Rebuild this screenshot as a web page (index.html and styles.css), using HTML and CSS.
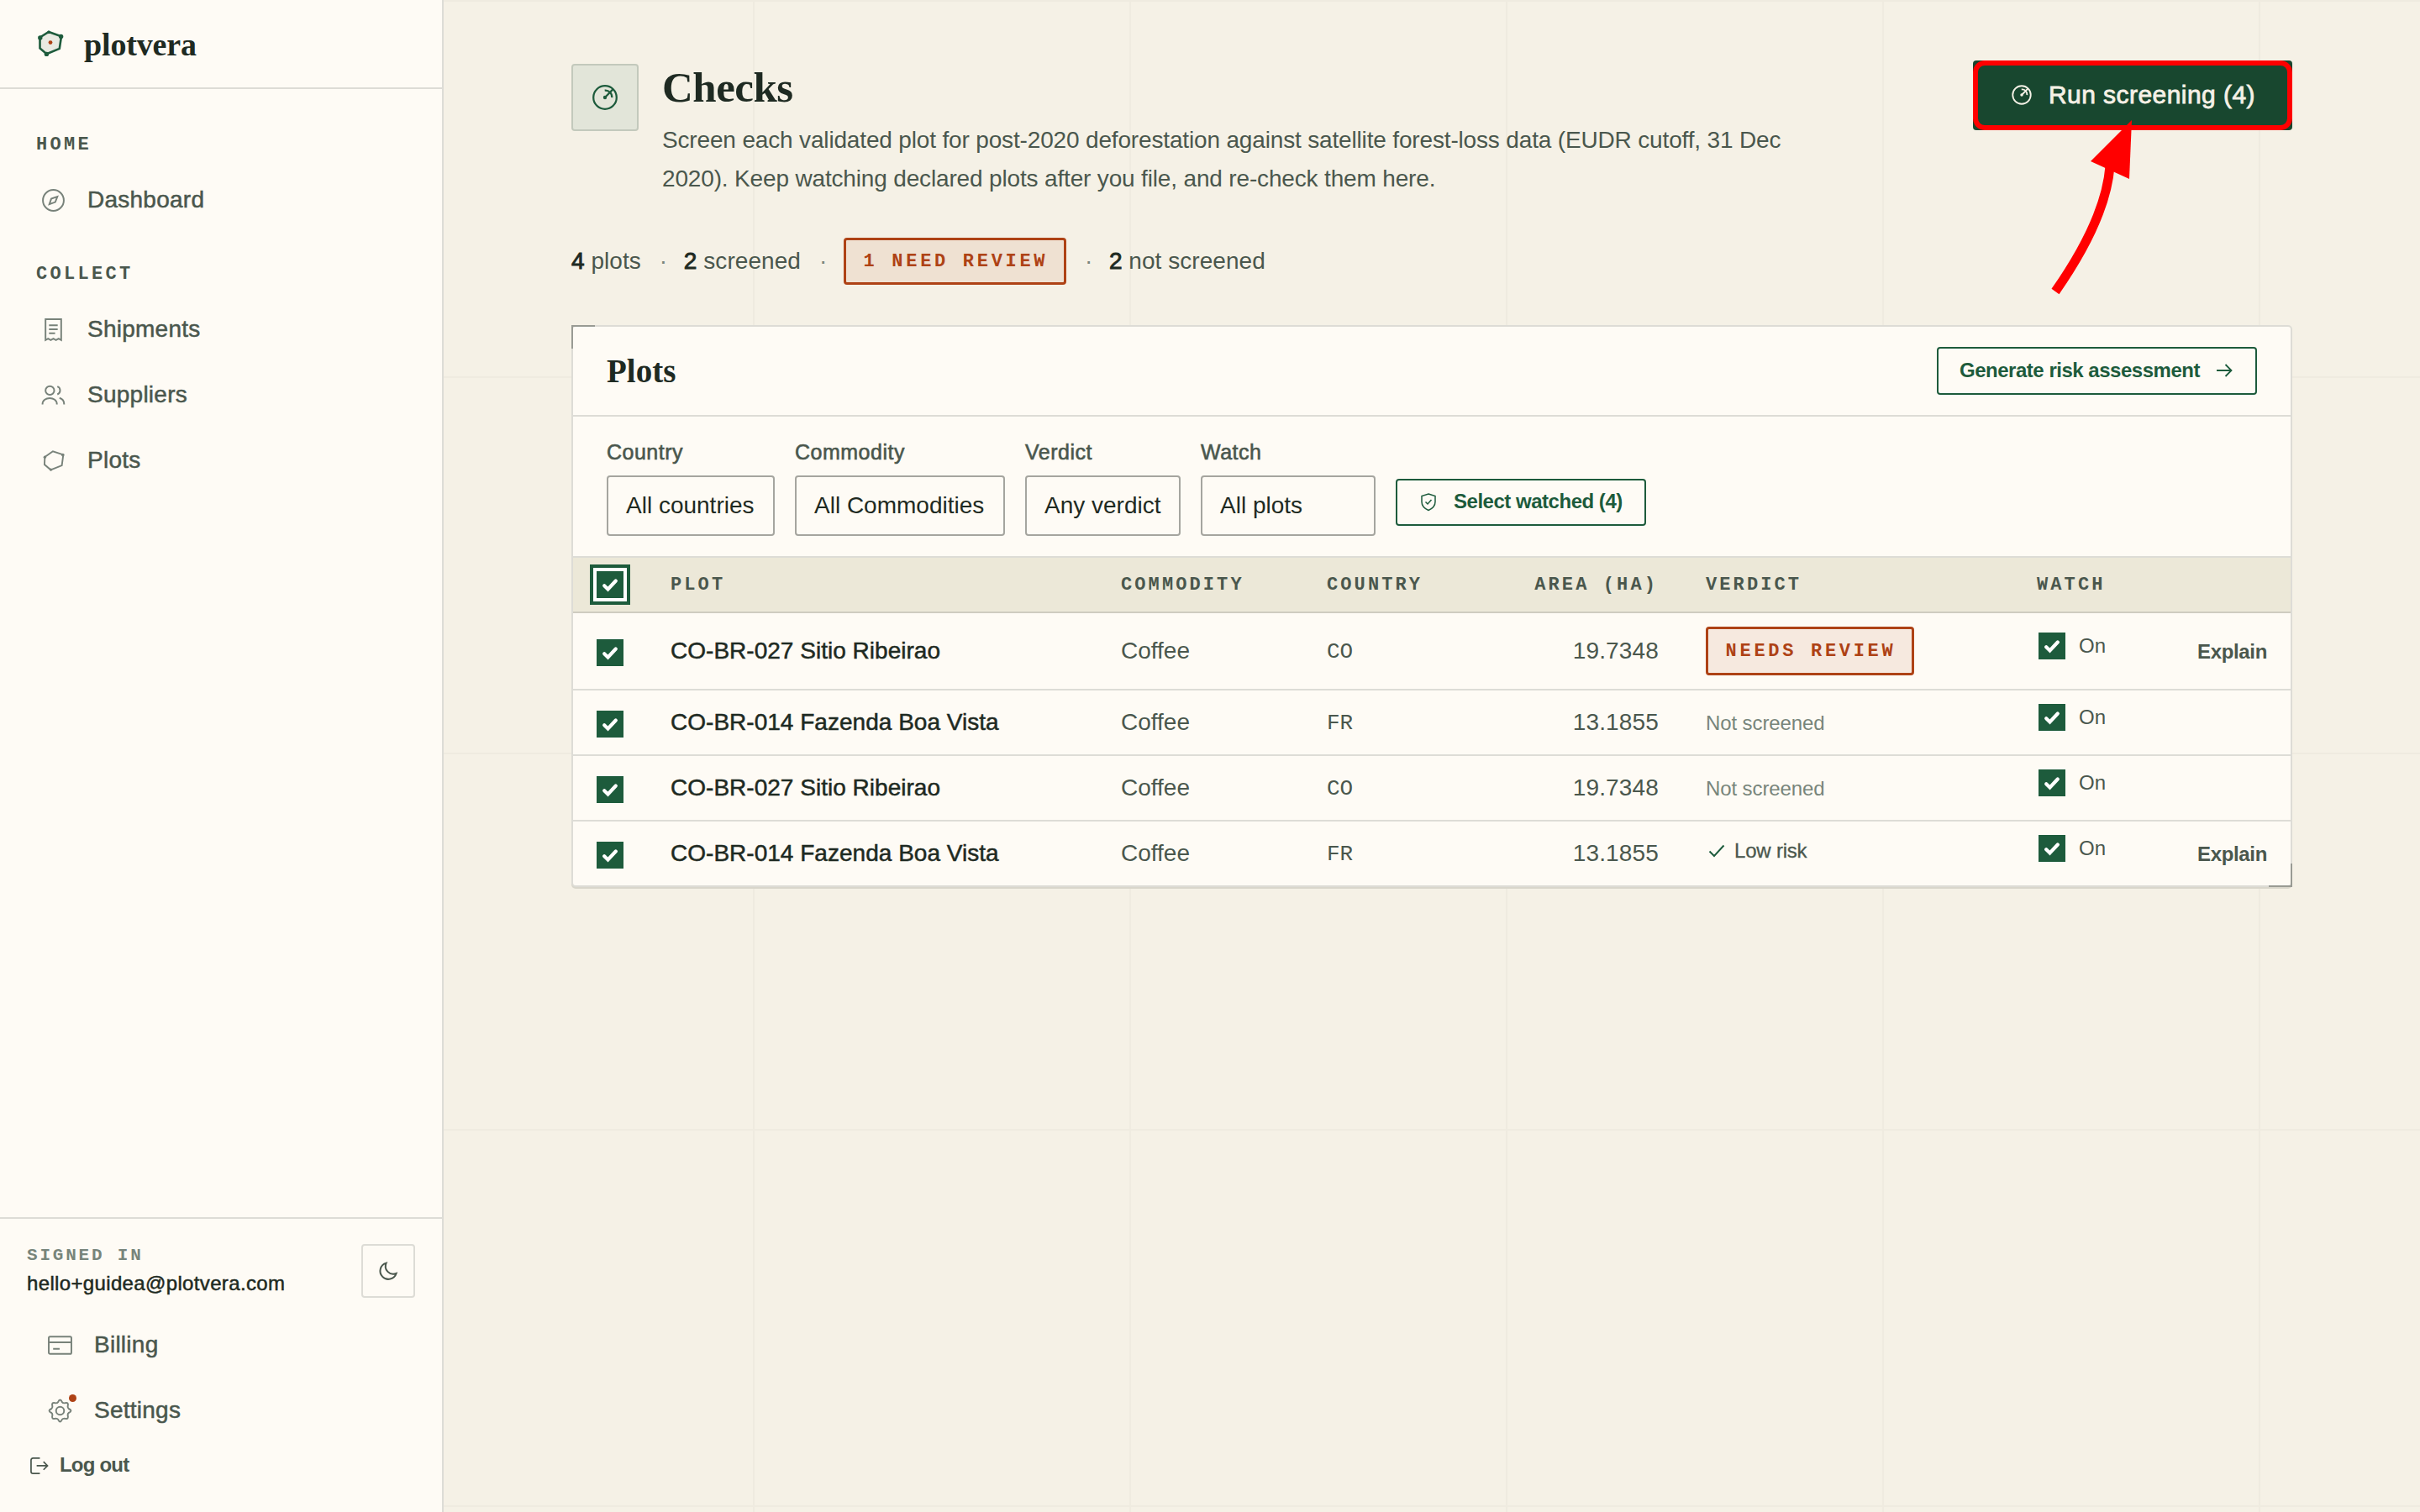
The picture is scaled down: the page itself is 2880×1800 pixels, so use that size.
FILE: index.html
```
<!DOCTYPE html>
<html lang="en">
<head>
    <meta charset="utf-8" />
    <meta name="viewport" content="width=device-width, initial-scale=1.0">
    <title>Checks - plotvera</title>
    <link rel="stylesheet" href="styles.css">
</head>
<body>

    <!-- Shared icons -->
    <svg class="sprite" width="0" height="0">
        <symbol id="i-gauge" viewBox="0 0 24 24">
            <circle cx="12" cy="12" r="9.2"/>
            <path d="M12 12l6.4-6.6M11.8 6.4c3.2-.4 5.900 2.400 5.700 5.700"/>
            <circle cx="12" cy="12" r=".7" fill="currentColor"/>
        </symbol>
        <symbol id="i-tick" viewBox="0 0 32 32">
            <path d="M9.2 17.2l4.3 4.2 9.3-9.900"/>
        </symbol>
        <symbol id="i-plot" viewBox="0 0 24 24">
            <path d="M3 8L11.500 2l11 3.600-1.500 11.400L9.2 21.600 2.600 16z"/>
            <circle class="node" cx="3" cy="8.2" r="1.500"/>
            <circle class="node" cx="22" cy="5.900" r="1.600"/>
            <circle class="node" cx="9.400" cy="21.400" r="1.500"/>
        </symbol>
    </svg>

    <div class="app">
        <aside class="sidebar">
            <div class="brand">
                <svg class="brand-mark" viewBox="0 0 32 34">
                    <path d="M3.5 9.5L14 3l15 5.3-2.2 14.6-15.3 6.3L3.5 22.5z"/>
                    <circle class="node" cx="3.8" cy="10" r="2.7"/>
                    <circle class="node" cx="14" cy="3.4" r="1.8"/>
                    <circle class="node" cx="28.6" cy="8.4" r="2.7"/>
                    <circle class="node" cx="11.4" cy="29.4" r="2.7"/>
                    <circle class="dot" cx="16" cy="15.6" r="2.4"/>
                </svg>
                <span class="brand-name">plotvera</span>
            </div>

            <nav class="nav">
                <div class="nav-group">
                    <h6 class="nav-title">HOME</h6>
                    <a class="nav-item">
                        <svg class="icon" viewBox="0 0 28 28"><circle cx="14" cy="14" r="12"/><path d="M18.6 9.8l-2.4 6.2-6.8 2.4 2.2-6.2z"/></svg>
                        Dashboard
                    </a>
                </div>
                <div class="nav-group">
                    <h6 class="nav-title">COLLECT</h6>
                    <a class="nav-item">
                        <svg class="icon" viewBox="0 0 28 28"><path d="M5 26V2h18v24l-3-1.7-3 1.7-3-1.7-3 1.7-3-1.7zM9 9h10M9 13.5h10M9 18h7"/></svg>
                        Shipments
                    </a>
                    <a class="nav-item">
                        <svg class="icon" viewBox="0 0 28 28"><circle cx="10" cy="8.6" r="5"/><path d="M1.5 24.5c0-9.6 16.6-9.6 16.6 0M18.6 4c4.2 1.4 4.2 7.6 0 9M21 17.2c3.6 1 5.4 3.8 5.4 7.3"/></svg>
                        Suppliers
                    </a>
                    <a class="nav-item">
                        <svg class="icon plot-icon"><use href="#i-plot"/></svg>
                        Plots
                    </a>
                </div>
            </nav>

            <div class="account">
                <div class="account-row">
                    <div>
                        <div class="account-label">SIGNED IN</div>
                        <div class="account-email">hello+guidea@plotvera.com</div>
                    </div>
                    <button class="theme-toggle">
                        <svg viewBox="0 0 24 24"><path d="M9.6 2.6a9.8 9.8 0 1 0 12 12.4A9.3 9.3 0 0 1 9.6 2.6z"/></svg>
                    </button>
                </div>
                <a class="nav-item">
                    <svg class="icon" viewBox="0 0 28 28"><rect x="1" y="4" width="26" height="20" rx="1.5"/><path d="M1 10.6h26M6 18h7.5"/></svg>
                    Billing
                </a>
                <a class="nav-item">
                    <span class="icon-wrap">
                        <!-- eight rounded teeth round the hub -->
                        <svg class="icon" viewBox="0 0 28 28"><circle cx="14" cy="14" r="4.6"/><path d="M11.6 4.200Q14-1.200 16.400 4.200Q17 5.200 19 5.200Q24.400 3.600 22.800 9Q22.800 11 23.800 11.600Q29.200 14 23.800 16.400Q22.800 17 22.800 19Q24.400 24.400 19 22.800Q17 22.800 16.400 23.800Q14 29.200 11.600 23.800Q11 22.800 9 22.800Q3.600 24.400 5.200 19Q5.200 17 4.200 16.400Q-1.200 14 4.200 11.600Q5.200 11 5.200 9Q3.600 3.600 9 5.200Q11 5.200 11.600 4.200z"/></svg>
                        <i class="alert-dot"></i>
                    </span>
                    Settings
                </a>
                <a class="logout">
                    <svg viewBox="0 0 24 22"><path d="M13 2H4.500Q2 2 2 4.500V18.500Q2 21 4.500 21H13M9 11.500H22.500M17.500 6.500l5 5-5 5"/></svg>
                    Log out
                </a>
            </div>
        </aside>

        <main class="main">
            <header class="page-head">
                <div class="page-icon"><svg><use href="#i-gauge"/></svg></div>
                <div class="page-text">
                    <h1>Checks</h1>
                    <p>Screen each validated plot for post-2020 deforestation against satellite forest-loss data (EUDR cutoff, 31 Dec<br>2020). Keep watching declared plots after you file, and re-check them here.</p>
                </div>
                <div class="run">
                    <button class="run-btn"><svg><use href="#i-gauge"/></svg>Run screening (4)</button>
                    <svg class="run-arrow" viewBox="0 0 120 220">
                        <path class="shaft" d="M26 207Q86 121 91 58"/>
                        <path class="tip" d="M117 3L68 52l46 21z"/>
                    </svg>
                </div>
            </header>

            <div class="stats">
                <span><b>4</b> plots</span><i class="sep">·</i>
                <span><b>2</b> screened</span><i class="sep">·</i>
                <span class="badge badge-summary">1 NEED REVIEW</span><i class="sep">·</i>
                <span><b>2</b> not screened</span>
            </div>

            <section class="panel">
                <div class="panel-head">
                    <h2>Plots</h2>
                    <button class="btn btn-risk">Generate risk assessment
                        <svg class="arrow" viewBox="0 0 20 18"><path d="M1 9h17.500M11.500 2l7 7-7 7"/></svg>
                    </button>
                </div>

                <div class="filters">
                    <div class="field"><label>Country</label><div class="select w-country">All countries</div></div>
                    <div class="field"><label>Commodity</label><div class="select w-commodity">All Commodities</div></div>
                    <div class="field"><label>Verdict</label><div class="select w-verdict">Any verdict</div></div>
                    <div class="field"><label>Watch</label><div class="select w-watch">All plots</div></div>
                    <button class="btn btn-watched">
                        <svg class="shield" viewBox="0 0 20 22"><path d="M10 1.500L18 4v7c0 5-3.500 8-8 10-4.500-2-8-5-8-10V4zM6.500 11l2.500 2.500 4.500-5"/></svg>
                        Select watched (4)
                    </button>
                </div>

                <table class="plots">
                    <colgroup>
                        <col class="c-check"><col class="c-plot"><col class="c-commodity"><col class="c-country"><col class="c-area"><col class="c-verdict"><col class="c-watch"><col>
                    </colgroup>
                    <thead>
                        <tr>
                            <th><span class="check focused"><svg><use href="#i-tick"/></svg></span></th>
                            <th>PLOT</th><th>COMMODITY</th><th>COUNTRY</th><th class="num">AREA (HA)</th><th class="verdict">VERDICT</th><th>WATCH</th><th></th>
                        </tr>
                    </thead>
                    <tbody>
                        <tr class="flagged">
                            <td><span class="check"><svg><use href="#i-tick"/></svg></span></td>
                            <td class="name">CO-BR-027 Sitio Ribeirao</td>
                            <td>Coffee</td>
                            <td class="code">CO</td>
                            <td class="num">19.7348</td>
                            <td class="verdict"><span class="badge badge-row">NEEDS REVIEW</span></td>
                            <td><span class="watch"><span class="check"><svg><use href="#i-tick"/></svg></span>On</span></td>
                            <td class="action">Explain</td>
                        </tr>
                        <tr>
                            <td><span class="check"><svg><use href="#i-tick"/></svg></span></td>
                            <td class="name">CO-BR-014 Fazenda Boa Vista</td>
                            <td>Coffee</td>
                            <td class="code">FR</td>
                            <td class="num">13.1855</td>
                            <td class="verdict muted">Not screened</td>
                            <td><span class="watch"><span class="check"><svg><use href="#i-tick"/></svg></span>On</span></td>
                            <td class="action"></td>
                        </tr>
                        <tr>
                            <td><span class="check"><svg><use href="#i-tick"/></svg></span></td>
                            <td class="name">CO-BR-027 Sitio Ribeirao</td>
                            <td>Coffee</td>
                            <td class="code">CO</td>
                            <td class="num">19.7348</td>
                            <td class="verdict muted">Not screened</td>
                            <td><span class="watch"><span class="check"><svg><use href="#i-tick"/></svg></span>On</span></td>
                            <td class="action"></td>
                        </tr>
                        <tr>
                            <td><span class="check"><svg><use href="#i-tick"/></svg></span></td>
                            <td class="name">CO-BR-014 Fazenda Boa Vista</td>
                            <td>Coffee</td>
                            <td class="code">FR</td>
                            <td class="num">13.1855</td>
                            <td class="verdict"><span class="low"><svg viewBox="0 0 20 16"><path d="M1.500 8.500l5.500 5.500L18.500 1.500"/></svg>Low risk</span></td>
                            <td><span class="watch"><span class="check"><svg><use href="#i-tick"/></svg></span>On</span></td>
                            <td class="action">Explain</td>
                        </tr>
                    </tbody>
                </table>
            </section>
        </main>
    </div>

</body>
</html>
```
FILE: styles.css
```
:root {
    --bg:      #f5f1e6;
    --grid:    #efebe0;
    --paper:   #fefbf5;
    --sand:    #ece8d8;
    --line:    #dddcd6;
    --ink:     #1e2a22;
    --body:    #4a574d;
    --muted:   #78857b;
    --green:   #1d5b3c;
    --deep:    #18472f;
    --rust:    #ae4215;
    --sans: "Liberation Sans", Arial, sans-serif;
    --serif: "Liberation Serif", "Times New Roman", serif;
    --mono: "Liberation Mono", "Courier New", monospace;
}

*, *::before, *::after { box-sizing: border-box; }

html, body {
    margin: 0;
    padding: 0;
    height: 100%;
}

body {
    font-family: var(--sans);
    font-size: 28px;
    color: var(--body);
    background-color: var(--bg);
    background-image:
        linear-gradient(var(--grid) 2px, transparent 2px),
        linear-gradient(90deg, var(--grid) 2px, transparent 2px);
    background-size: 448px 448px;
    overflow: hidden;
}

h1, h2, h6, p { margin: 0; }

button {
    font-family: inherit;
    cursor: pointer;
}

svg {
    display: block;
    flex: none;
    fill: none;
    stroke: currentColor;
}

.sprite { position: absolute; }

.app {
    display: flex;
    height: 1800px;
}

/* Sidebar */
.sidebar {
    display: flex;
    flex-direction: column;
    width: 528px;
    flex: none;
    background: var(--paper);
    border-right: 2px solid var(--line);
}

.brand {
    display: flex;
    align-items: center;
    gap: 24px;
    height: 106px;
    padding-left: 44px;
    border-bottom: 2px solid var(--line);
}

.brand-mark {
    width: 32px;
    height: 34px;
    stroke: var(--green);
    stroke-width: 2.6;
}

.brand-mark path { fill: #e9eae2; }
.brand-mark .node { fill: var(--green); stroke: none; }
.brand-mark .dot { fill: var(--rust); stroke: none; }

.brand-name {
    padding-top: 2px;
    font: bold 38px/60px var(--serif);
    letter-spacing: -0.15px;
    color: var(--ink);
}

.nav {
    flex: 1;
    padding: 45px 0 0 43px;
}

.nav-group { margin-bottom: 28px; }

.nav-title {
    height: 48px;
    font: bold 22px/44px var(--mono);
    letter-spacing: 3.3px;
}

.nav-item {
    display: flex;
    align-items: center;
    gap: 26px;
    height: 78px;
    padding-left: 6px;
    letter-spacing: 0.25px;
    -webkit-text-stroke: 0.5px;
}

.icon {
    width: 29px;
    height: 29px;
    color: #78827a;
    stroke-width: 1.9;
}

.plot-icon {
    padding: 1px;
    stroke-width: 1.7;
}

.node { fill: currentColor; stroke: none; }

.account {
    height: 351px;
    padding: 29px 32px 0;
    border-top: 2px solid var(--line);
}

.account-row {
    display: flex;
    align-items: center;
    justify-content: space-between;
    height: 66px;
    margin-bottom: 16px;
}

.account-label {
    font: bold 21px/30px var(--mono);
    letter-spacing: 2.8px;
    color: var(--muted);
}

.account-email {
    font-size: 24px;
    line-height: 36px;
    letter-spacing: 0.35px;
    color: var(--ink);
    -webkit-text-stroke: 0.5px;
}

.theme-toggle {
    display: flex;
    align-items: center;
    justify-content: center;
    width: 64px;
    height: 64px;
    padding: 0;
    color: var(--body);
    background: none;
    border: 2px solid var(--line);
    border-radius: 4px;
}

.theme-toggle svg {
    width: 24px;
    height: 24px;
    stroke-width: 2;
}

.account .nav-item {
    padding-left: 25px;
    gap: 26px;
}

.icon-wrap { position: relative; }

.alert-dot {
    position: absolute;
    top: -5px;
    right: -5px;
    width: 9px;
    height: 9px;
    background: var(--rust);
    border-radius: 50%;
}

.logout {
    display: flex;
    align-items: center;
    gap: 13px;
    height: 52px;
    padding-left: 3px;
    font-size: 24px;
    font-weight: bold;
    letter-spacing: -0.8px;
}

.logout svg {
    width: 23px;
    height: 21px;
    stroke-width: 1.8;
}

/* Page header */
.main {
    width: 2048px;
    margin: 0 auto;
    padding-top: 72px;
}

.page-head {
    display: flex;
    height: 163px;
}

.page-icon {
    display: flex;
    align-items: center;
    justify-content: center;
    width: 80px;
    height: 80px;
    margin: 4px 28px 0 0;
    color: var(--green);
    background: #e2e5d9;
    border: 2px solid #c3c9bc;
    border-radius: 4px;
}

.page-icon svg {
    width: 36px;
    height: 36px;
    stroke-width: 1.5;
}

.page-text { flex: 1; }

.page-text h1 {
    font: bold 51px/65px var(--serif);
    letter-spacing: -0.5px;
    color: var(--ink);
}

.page-text p {
    margin-top: 7px;
    line-height: 46px;
    letter-spacing: -0.16px;
    white-space: nowrap;
}

.run { position: relative; }

.run-btn {
    position: relative;
    display: flex;
    align-items: center;
    justify-content: center;
    gap: 18px;
    width: 380px;
    height: 83px;
    padding: 0 0 2px;
    font-size: 30px;
    letter-spacing: 0.45px;
    color: #f5f1e6;
    background: var(--deep);
    border: none;
    border-radius: 4px;
    -webkit-text-stroke: 0.8px;
}

/* Highlight ring round the call to action */
.run-btn::after {
    content: "";
    position: absolute;
    inset: 0;
    border: 6px solid #f00;
    border-radius: 14px;
}

.run-btn svg {
    width: 28px;
    height: 28px;
    stroke-width: 1.6;
}

.run-arrow {
    position: absolute;
    left: 72px;
    top: 68px;
    width: 120px;
    height: 220px;
    stroke: none;
}

.run-arrow .shaft { stroke: #f00; stroke-width: 11; }
.run-arrow .tip { fill: #f00; }

.stats {
    display: flex;
    align-items: center;
    gap: 22px;
    height: 56px;
    margin: 48px 0;
    white-space: nowrap;
}

.stats span { letter-spacing: 0.05px; }

.stats b {
    font-weight: normal;
    color: var(--ink);
    -webkit-text-stroke: 0.9px;
}

.sep {
    width: 7px;
    font-style: normal;
    color: var(--muted);
    text-align: center;
}

.stats .badge,
.badge {
    display: flex;
    align-items: center;
    justify-content: center;
    height: 56px;
    padding: 2px 0 0 2px;
    font: bold 22px/48px var(--mono);
    letter-spacing: 3.7px;
    color: var(--rust);
    background: #f6e9df;
    border: 3px solid var(--rust);
    border-radius: 4px;
}

.stats .badge-summary { width: 265px; background: #efe1d2; }
.badge-row { width: 248px; height: 58px; }

/* Panel */
.panel {
    position: relative;
    background: var(--paper);
    border: 2px solid var(--line);
    border-radius: 5px;
    box-shadow: 0 2px 0 #d9d6cb;
}

/* Survey-style corner ticks */
.panel::before,
.panel::after {
    content: "";
    position: absolute;
    width: 28px;
    height: 28px;
    border: 0 solid #999b94;
}

.panel::before {
    top: -2px;
    left: -2px;
    border-width: 2px 0 0 2px;
}

.panel::after {
    right: -2px;
    bottom: -2px;
    border-width: 0 2px 2px 0;
}

.panel-head {
    display: flex;
    align-items: center;
    justify-content: space-between;
    height: 107px;
    padding: 0 40px;
    border-bottom: 2px solid var(--line);
}

.panel-head h2 {
    font: bold 39px/60px var(--serif);
    letter-spacing: 0;
    color: var(--ink);
}

.btn {
    display: flex;
    align-items: center;
    height: 57px;
    padding: 0 25px;
    font-size: 24px;
    font-weight: bold;
    letter-spacing: -0.48px;
    color: var(--green);
    background: none;
    border: 2px solid var(--green);
    border-radius: 4px;
    white-space: nowrap;
}

.btn-risk {
    width: 381px;
    padding-bottom: 1px;
}

.arrow {
    width: 20px;
    height: 18px;
    margin-left: 19px;
    stroke-width: 1.8;
}

.filters {
    display: flex;
    align-items: flex-end;
    gap: 24px;
    height: 168px;
    padding: 0 40px 24px;
    border-bottom: 2px solid var(--line);
}

.field label {
    display: block;
    margin-bottom: 10px;
    font-size: 25px;
    line-height: 36px;
    letter-spacing: 0.5px;
    -webkit-text-stroke: 0.6px;
}

.select {
    height: 72px;
    padding-left: 21px;
    line-height: 68px;
    color: var(--ink);
    border: 2px solid #a5a59f;
    border-radius: 4px;
    white-space: nowrap;
}

.w-country { width: 200px; }
.w-commodity { width: 250px; }
.w-verdict { width: 185px; }
.w-watch { width: 208px; }

.btn-watched {
    width: 298px;
    height: 56px;
    margin-bottom: 12px;
    padding-bottom: 2px;
}

.shield {
    width: 20px;
    height: 23px;
    margin: 0 20px 0 2px;
    stroke-width: 1.5;
}

/* Table */
.plots {
    width: 100%;
    table-layout: fixed;
    border-collapse: separate;
    border-spacing: 0;
}

.c-check     { width: 88px; }
.c-plot      { width: 536px; }
.c-commodity { width: 245px; }
.c-country   { width: 190px; }
.c-area      { width: 261px; }
.c-verdict   { width: 394px; }
.c-watch     { width: 162px; }

.plots th,
.plots td {
    height: 78px;
    padding: 0 0 0 28px;
    font-weight: normal;
    text-align: left;
    border-bottom: 2px solid var(--line);
    white-space: nowrap;
}

.plots th {
    height: 66px;
    padding-top: 2px;
    font: bold 22px/40px var(--mono);
    letter-spacing: 3.1px;
    background: var(--sand);
    border-color: #cfccc0;
}

.plots .flagged td { height: 92px; }
.plots tr:last-child td { height: 76px; border-bottom: none; }
.plots thead th { height: 66px; border-bottom: 2px solid #cfccc0; }

.plots .num {
    padding-left: 0;
    padding-right: 28px;
    letter-spacing: 0.15px;
    text-align: right;
}

.plots th.num { padding-right: 29px; letter-spacing: 3.1px; }
.plots .verdict { padding-left: 28px; }

.plots .name {
    color: var(--ink);
    letter-spacing: 0.02px;
    -webkit-text-stroke: 0.5px;
}

.plots .code {
    padding-top: 1px;
    font-family: var(--mono);
    font-size: 26px;
}

.plots .muted {
    padding-top: 1px;
    font-size: 24px;
    letter-spacing: -0.1px;
    color: var(--muted);
}

.plots .action {
    padding: 1px 28px 0 0;
    font-size: 24px;
    font-weight: bold;
    letter-spacing: -0.35px;
    text-align: right;
}

.check {
    display: block;
    width: 32px;
    height: 32px;
    background: var(--green);
}

.check svg {
    width: 32px;
    height: 32px;
    stroke: #fff;
    stroke-width: 4.2;
    stroke-linecap: round;
}

.check.focused {
    margin-top: -2px;
    box-shadow: 0 0 0 4px #fff, 0 0 0 8px var(--green);
}

td > .check { margin-top: 3px; }

.watch {
    display: flex;
    align-items: center;
    gap: 16px;
    margin-bottom: 12px;
    padding-left: 2px;
    font-size: 24px;
}

.low {
    display: flex;
    align-items: center;
    gap: 11px;
    padding: 0 0 7px 3px;
    font-size: 24px;
    letter-spacing: -0.2px;
    -webkit-text-stroke: 0.3px;
}

.low svg {
    width: 20px;
    height: 16px;
    color: var(--green);
    stroke-width: 2;
}
```
